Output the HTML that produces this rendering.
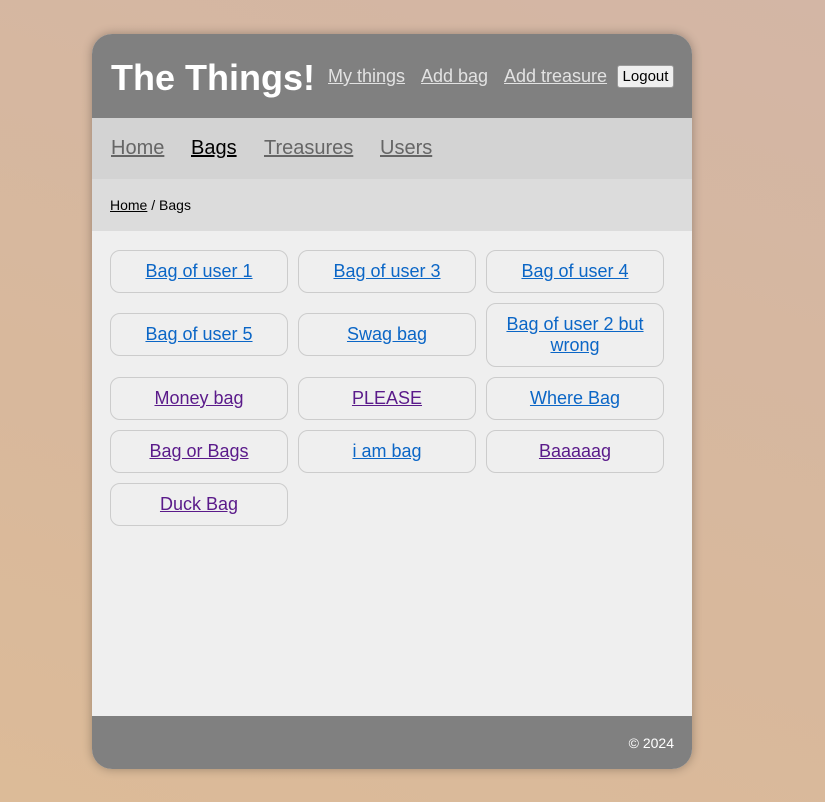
<!DOCTYPE html>
<html><head><style>
html,body{margin:0;height:802px;overflow:hidden}
body{background:linear-gradient(200deg,#d3b6a5 0%,#d8b89c 60%,#dcbb98 100%);font-family:"Liberation Sans",Arial,sans-serif}
.card{position:absolute;left:92px;top:34px;width:600px;height:735px;border-radius:20px;overflow:hidden;box-shadow:0 0 10px rgba(0,0,0,.3);background:#efefef}
.hdr{height:84px;background:#808080;position:relative}
.hdr h1{position:absolute;left:19px;top:24px;margin:0;font-size:36px;line-height:40px;color:#fff;font-weight:bold}
.hl{position:absolute;top:32px;font-size:18px;color:#e2e2e2;text-decoration:underline}
.lo{position:absolute;left:525px;top:31px;width:55px;height:21px;background:#efefef;border:1px solid #999;border-radius:3px;font-size:15px;line-height:21px;text-align:center;color:#000}
.nav{height:61px;background:#d3d3d3;position:relative}
.nav a{position:absolute;top:19px;font-size:20px;color:#666;text-decoration:underline}
.bc{height:52px;background:#dcdcdc;font-size:14px;line-height:52px;padding-left:18px;color:#000}
.bc a{color:#000;text-decoration:underline}
.grid{position:absolute;left:18px;top:216px;width:560px}
.b{position:absolute;width:176px;border:1px solid #ccc;border-radius:10px;text-align:center;font-size:18px;line-height:21px;display:flex;align-items:center;justify-content:center}
.b a{text-decoration:underline;color:#0b66c6}
.b a.v{color:#5a1a8a}
.ft{position:absolute;left:0;bottom:0;width:600px;height:53px;background:#808080;color:#fff;font-size:14px;text-align:right;line-height:54px}
.ft span{margin-right:18px}
</style></head><body>
<div class="card">
<div class="hdr"><h1>The Things!</h1>
<span class="hl" style="left:236px">My things</span>
<span class="hl" style="left:329px">Add bag</span>
<span class="hl" style="left:412px">Add treasure</span>
<div class="lo">Logout</div></div>
<div class="nav"><a style="left:19px">Home</a><a style="left:99px;color:#000">Bags</a><a style="left:172px">Treasures</a><a style="left:288px">Users</a></div>
<div class="bc"><a>Home</a> / Bags</div>
<div class="grid">
<div class="b" style="left:0;top:0;height:41px"><a>Bag of user 1</a></div>
<div class="b" style="left:188px;top:0;height:41px"><a>Bag of user 3</a></div>
<div class="b" style="left:376px;top:0;height:41px"><a>Bag of user 4</a></div>
<div class="b" style="left:0;top:63px;height:41px"><a>Bag of user 5</a></div>
<div class="b" style="left:188px;top:63px;height:41px"><a>Swag bag</a></div>
<div class="b" style="left:376px;top:53px;height:62px"><a>Bag of user 2 but wrong</a></div>
<div class="b" style="left:0;top:127px;height:41px"><a class="v">Money bag</a></div>
<div class="b" style="left:188px;top:127px;height:41px"><a class="v">PLEASE</a></div>
<div class="b" style="left:376px;top:127px;height:41px"><a>Where Bag</a></div>
<div class="b" style="left:0;top:180px;height:41px"><a class="v">Bag or Bags</a></div>
<div class="b" style="left:188px;top:180px;height:41px"><a>i am bag</a></div>
<div class="b" style="left:376px;top:180px;height:41px"><a class="v">Baaaaag</a></div>
<div class="b" style="left:0;top:233px;height:41px"><a class="v">Duck Bag</a></div>
</div>
<div class="ft"><span>© 2024</span></div>
</div>
</body></html>
